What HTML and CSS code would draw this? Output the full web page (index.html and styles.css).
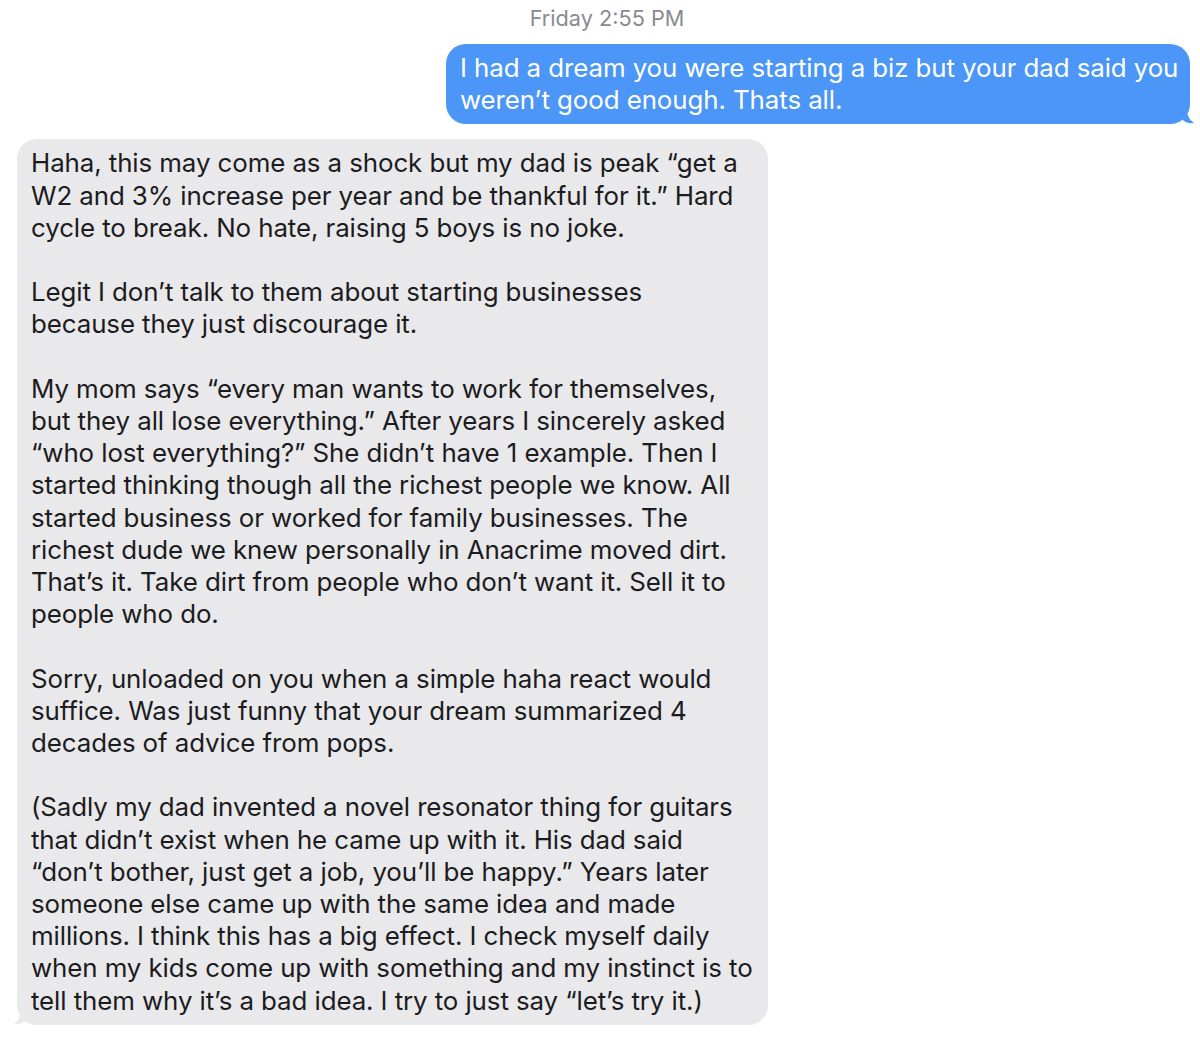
FILE: index.html
```html
<!DOCTYPE html>
<html>
<head>
<meta charset="utf-8">
<link rel="stylesheet" href="styles.css">
</head>
<body>
<div class="thread">
  <div class="stamp">Friday 2:55 PM</div>
  <div class="row out">
    <div class="bubble blue">I had a dream you were starting a biz but your dad said you<br>weren’t good enough. Thats all.
      <svg class="tail tail-r" width="16" height="22" viewBox="0 0 16 22"><path d="M0 0 L4 0 C4 10 6 17 12 21 C7 22 2 20 0 17 Z" fill="#4b96f6"/></svg>
    </div>
  </div>
  <div class="row in">
    <div class="bubble gray">Haha, this may come as a shock but my dad is peak “get a<br>W2 and 3% increase per year and be thankful for it.” Hard<br>cycle to break. No hate, raising 5 boys is no joke.<br><br>Legit I don’t talk to them about starting businesses<br>because they just discourage it.<br><br>My mom says “every man wants to work for themselves,<br>but they all lose everything.” After years I sincerely asked<br>“who lost everything?” She didn’t have 1 example. Then I<br>started thinking though all the richest people we know. All<br>started business or worked for family businesses. The<br>richest dude we knew personally in Anacrime moved dirt.<br>That’s it. Take dirt from people who don’t want it. Sell it to<br>people who do.<br><br>Sorry, unloaded on you when a simple haha react would<br>suffice. Was just funny that your dream summarized 4<br>decades of advice from pops.<br><br>(Sadly my dad invented a novel resonator thing for guitars<br>that didn’t exist when he came up with it. His dad said<br>“don’t bother, just get a job, you’ll be happy.” Years later<br>someone else came up with the same idea and made<br>millions. I think this has a big effect. I check myself daily<br>when my kids come up with something and my instinct is to<br>tell them why it’s a bad idea. I try to just say “let’s try it.)
      <svg class="tail tail-l" width="16" height="22" viewBox="0 0 16 22"><path d="M16 0 L12 0 C12 10 10 17 4 21 C9 22 14 20 16 17 Z" fill="#e9e9eb"/></svg>
    </div>
  </div>
</div>
</body>
</html>
```
FILE: styles.css
```css
html, body {
  margin: 0;
  padding: 0;
  background: #ffffff;
}
body {
  font-family: Inter, "Noto Sans", "Liberation Sans", sans-serif;
  width: 1200px;
  height: 1037px;
  overflow: hidden;
}
.thread {
  display: flex;
  flex-direction: column;
  padding-top: 4px;
}
.stamp {
  text-align: center;
  color: #8a8a8f;
  font-size: 21.7px;
  line-height: 28px;
  padding-left: 14px;
  margin-bottom: 12px;
}
.row {
  display: flex;
}
.row.out {
  justify-content: flex-end;
  padding-right: 10px;
}
.row.in {
  padding-left: 17px;
  margin-top: 15px;
}
.bubble {
  position: relative;
  font-size: 25.9px;
  line-height: 32.2px;
  letter-spacing: -0.1px;
  border-radius: 20px;
  padding: 8px 14px;
  white-space: nowrap;
}
.blue {
  background: #4b96f6;
  color: #ffffff;
  width: 716px;
}
.gray {
  background: #e9e9eb;
  color: #1c1c1e;
  width: 723px;
}
.tail {
  position: absolute;
  bottom: 0;
}
.tail-r {
  right: -8px;
}
.tail-l {
  left: -7px;
}
```
